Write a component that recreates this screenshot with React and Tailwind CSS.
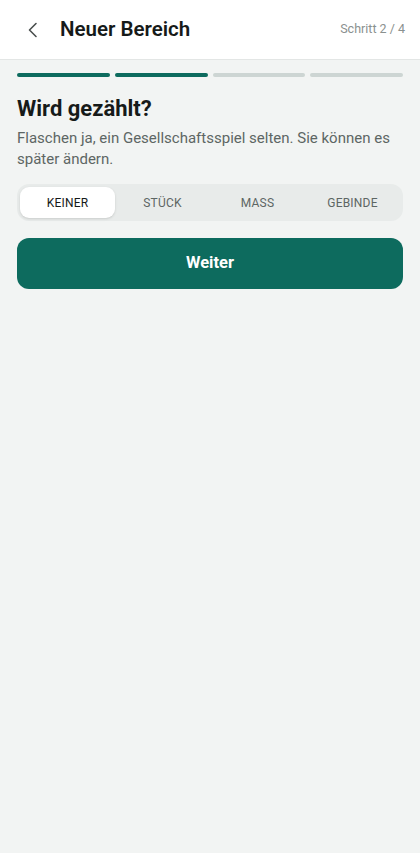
import { useState } from 'react'

const OPTIONS = ['KEINER', 'STÜCK', 'MASS', 'GEBINDE']

export default function App() {
  const [mode, setMode] = useState('KEINER')
  const step = 2
  const total = 4

  return (
    <div className="min-h-[853px] bg-[#f2f4f3] font-['Roboto',_'Liberation_Sans',_sans-serif]">
      {/* Header */}
      <header className="h-[60px] bg-white border-b border-[#e3e6e5] flex items-center pl-[24px] pr-[15px]">
        <button className="w-[18px] h-[18px] flex items-center justify-center text-[#4a4f4e]">
          <svg width="18" height="18" viewBox="0 0 18 18" fill="none">
            <path d="M12 2.5 5.5 9 12 15.5" stroke="currentColor" strokeWidth="1.6" strokeLinecap="round" strokeLinejoin="round" />
          </svg>
        </button>
        <h1 className="ml-[18px] text-[20.5px] font-semibold text-[#161a19] leading-none">Neuer Bereich</h1>
        <span className="ml-auto text-[12.5px] text-[#8a918f]">Schritt {step} / {total}</span>
      </header>

      <main className="px-[17px]">
        {/* Progress */}
        <div className="mt-[13px] flex gap-[5px]">
          {Array.from({ length: total }).map((_, i) => (
            <div
              key={i}
              className={`flex-1 h-[4px] rounded-full ${i < step ? 'bg-[#0d6b5e]' : 'bg-[#cdd5d3]'}`}
            />
          ))}
        </div>

        <h2 className="mt-[18px] text-[22px] font-bold text-[#161a19] leading-[28px]">Wird gezählt?</h2>
        <p className="mt-[5px] text-[15px] leading-[21px] text-[#5d6664]">
          Flaschen ja, ein Gesellschaftsspiel selten. Sie können es später ändern.
        </p>

        {/* Segmented control */}
        <div className="mt-[14px] bg-[#e8ebea] rounded-[12px] p-[3px] flex">
          {OPTIONS.map(opt => (
            <button
              key={opt}
              onClick={() => setMode(opt)}
              className={`flex-1 h-[31px] rounded-[9px] text-[12px] tracking-[0.2px] ${
                mode === opt ? 'bg-white text-[#161a19] shadow-sm' : 'text-[#5d6664]'
              }`}
            >
              {opt}
            </button>
          ))}
        </div>

        <button className="mt-[17px] w-full h-[51px] rounded-[12px] bg-[#0d6b5e] text-white text-[16.5px] font-bold">
          Weiter
        </button>
      </main>
    </div>
  )
}
